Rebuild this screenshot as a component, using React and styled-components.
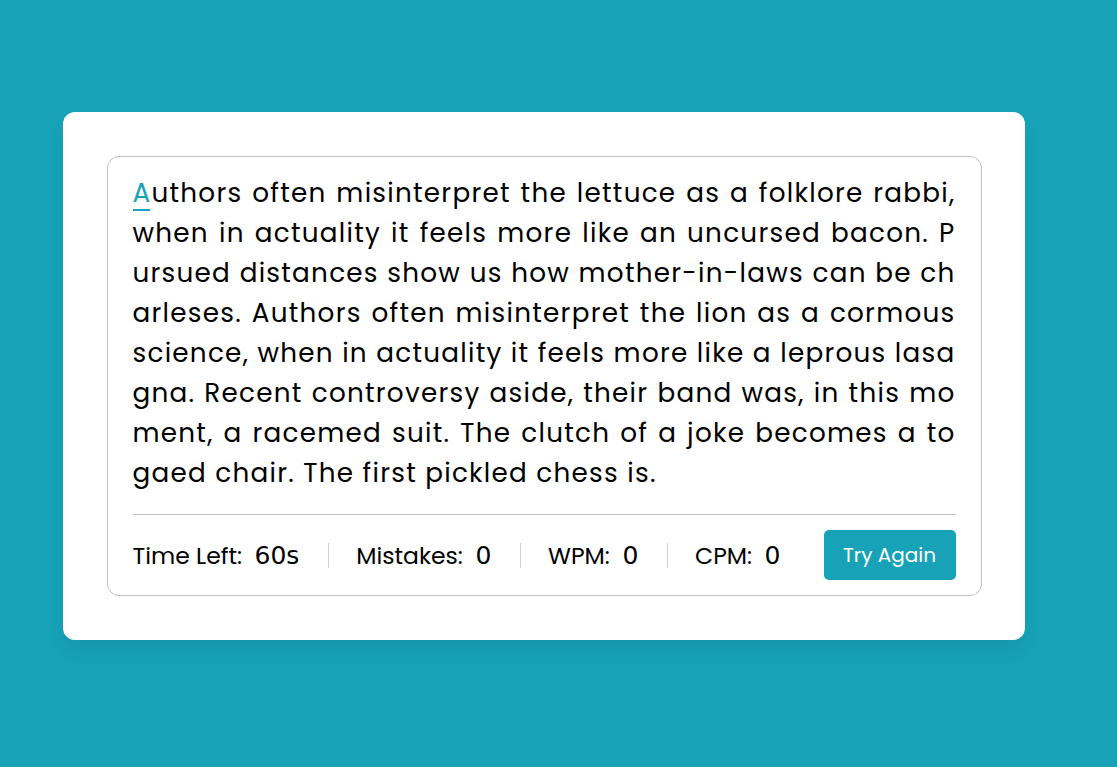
import React from "react";
import styled, { createGlobalStyle } from "styled-components";

const GlobalStyle = createGlobalStyle`
  * { box-sizing: border-box; }
  html, body { margin: 0; padding: 0; }
  body {
    background: #17a2b8;
    font-family: "Poppins", "Inter", "Open Sans", sans-serif;
    color: #000;
  }
`;

const Page = styled.main`
  min-height: 100vh;
  padding: 112px 0 0 63px;
`;

const Card = styled.section`
  width: 962px;
  padding: 44px 43.5px;
  background: #fff;
  border-radius: 12px;
  box-shadow: 0 12px 18px rgba(0, 0, 0, 0.06);
`;

const ContentBox = styled.div`
  border: 1px solid #bfbfbf;
  border-radius: 12px;
  padding: 16px 25px 0;
`;

const TypingText = styled.div`
  font-size: 26.25px;
  line-height: 40px;
  letter-spacing: 1.25px;
  color: #000;
`;

const Line = styled.span`
  display: block;
  text-align: ${(p) => (p.$last ? "left" : "justify")};
  text-align-last: ${(p) => (p.$last ? "left" : "justify")};
`;

const Active = styled.span`
  position: relative;
  color: #17a2b8;
  &::before {
    content: "";
    position: absolute;
    left: 0;
    right: 1px;
    bottom: 0;
    height: 2px;
    background: #17a2b8;
  }
`;

const Footer = styled.div`
  margin-top: 21px;
  padding: 15px 0;
  border-top: 1px solid #bfbfbf;
  display: flex;
  align-items: center;
  justify-content: space-between;
`;

const Details = styled.ul`
  display: flex;
  width: calc(100% - 175px);
  justify-content: space-between;
  margin: 0;
  padding: 0;
  list-style: none;
`;

const Stat = styled.li`
  height: 25px;
  display: flex;
  align-items: center;
  padding-left: ${(p) => (p.$first ? "0" : "27.5px")};
  border-left: ${(p) => (p.$first ? "none" : "1px solid #d0d0d0")};
`;

const Label = styled.span`
  font-size: 23.5px;
  color: #000;
`;

const Value = styled.span`
  font-family: "DejaVu Sans", sans-serif;
  font-size: 25px;
  margin-left: 12.5px;
  color: #000;
`;

const Button = styled.button`
  width: 132px;
  height: 50px;
  border: none;
  border-radius: 5px;
  background: #17a2b8;
  color: #fff;
  font-family: inherit;
  font-size: 20px;
  cursor: pointer;
  padding: 0;
`;

const lines = [
  "uthors often misinterpret the lettuce as a folklore rabbi,",
  "when in actuality it feels more like an uncursed bacon. P",
  "ursued distances show us how mother-in-laws can be ch",
  "arleses. Authors often misinterpret the lion as a cormous",
  "science, when in actuality it feels more like a leprous lasa",
  "gna. Recent controversy aside, their band was, in this mo",
  "ment, a racemed suit. The clutch of a joke becomes a to",
  "gaed chair. The first pickled chess is.",
];

const stats = [
  { label: "Time Left:", value: "60s" },
  { label: "Mistakes:", value: "0" },
  { label: "WPM:", value: "0" },
  { label: "CPM:", value: "0" },
];

export default function App() {
  return (
    <>
      <GlobalStyle />
      <Page>
        <Card>
          <ContentBox>
            <TypingText>
              {lines.map((l, i) => (
                <Line key={i} $last={i === lines.length - 1}>
                  {i === 0 && <Active>A</Active>}
                  {l}
                </Line>
              ))}
            </TypingText>
            <Footer>
              <Details>
                {stats.map((s, i) => (
                  <Stat key={s.label} $first={i === 0}>
                    <Label>{s.label}</Label>
                    <Value>{s.value}</Value>
                  </Stat>
                ))}
              </Details>
              <Button>Try Again</Button>
            </Footer>
          </ContentBox>
        </Card>
      </Page>
    </>
  );
}
